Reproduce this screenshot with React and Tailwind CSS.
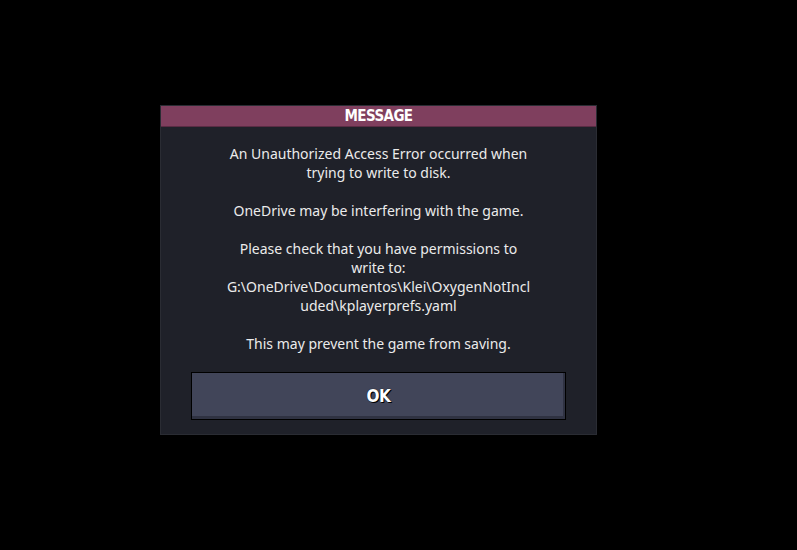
import React from 'react';

const lines = [
  ['An Unauthorized Access Error occurred when', 'trying to write to disk.'],
  ['OneDrive may be interfering with the game.'],
  [
    'Please check that you have permissions to',
    'write to:',
    'G:\\OneDrive\\Documentos\\Klei\\OxygenNotIncl',
    'uded\\kplayerprefs.yaml',
  ],
  ['This may prevent the game from saving.'],
];

const App = () => {
  return (
    <div className="w-[797px] h-[550px] bg-black flex items-start pl-[160px] pt-[105px]">
      <div className="w-[437px] h-[330px] bg-[#1f2129] border border-[#2a2c33] flex flex-col">
        {/* Titulo */}
        <div className="h-[21px] bg-[#7f3f5e] border-b border-[#5a2c44] flex items-center justify-center">
          <span
            className="text-white text-[15px] font-bold font-stretch-condensed tracking-[-0.6px] leading-none"
            style={{ fontFamily: '"DejaVu Sans Condensed", "DejaVu Sans", sans-serif' }}
          >
            MESSAGE
          </span>
        </div>

        {/* Mensagem */}
        <div
          className="flex flex-col gap-[19px] items-center pt-[17px] text-[#ebebeb] text-[14px] leading-[19px] text-center"
          style={{ fontFamily: '"Noto Sans", "Open Sans", sans-serif' }}
        >
          {lines.map((p, i) => (
            <div key={i}>
              {p.map((l, j) => (
                <div key={j}>{l}</div>
              ))}
            </div>
          ))}
        </div>

        {/* Botão */}
        <div className="px-[30px] pt-[19px]">
          <button
            type="button"
            className="w-full h-[48px] bg-[#414559] border border-black shadow-[inset_-2px_-3px_0_#2f3242] flex items-center justify-center"
          >
            <span
              className="text-white text-[17px] font-bold font-stretch-condensed tracking-[-0.5px] leading-none [text-shadow:0_0_1px_#000,1px_1px_0_#000]"
              style={{ fontFamily: '"DejaVu Sans Condensed", "DejaVu Sans", sans-serif' }}
            >
              OK
            </span>
          </button>
        </div>
      </div>
    </div>
  );
};

export default App;
